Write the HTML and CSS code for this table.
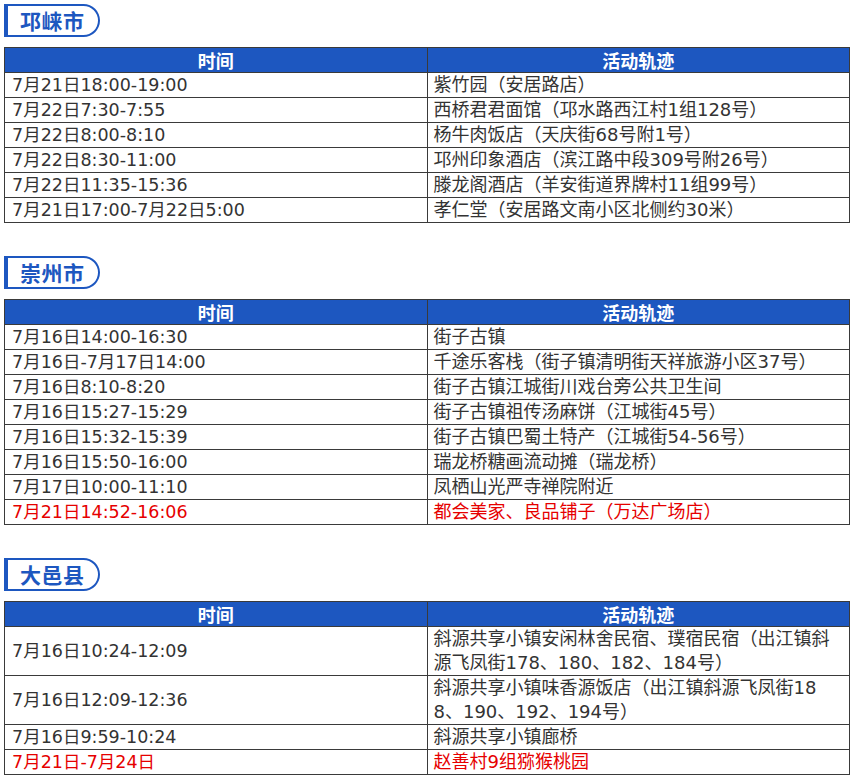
FILE: index.html
```html
<!DOCTYPE html>
<html lang="zh">
<head>
<meta charset="utf-8">
<title>活动轨迹</title>
<link rel="stylesheet" href="styles.css">
</head>
<body>
<div class="page">
  <section class="area">
    <div class="tag">邛崃市</div>
    <table class="trace">
      <thead><tr><th>时间</th><th>活动轨迹</th></tr></thead>
      <tbody>
        <tr><td>7月21日18:00-19:00</td><td>紫竹园（安居路店）</td></tr>
        <tr><td>7月22日7:30-7:55</td><td>西桥君君面馆（邛水路西江村1组128号）</td></tr>
        <tr><td>7月22日8:00-8:10</td><td>杨牛肉饭店（天庆街68号附1号）</td></tr>
        <tr><td>7月22日8:30-11:00</td><td>邛州印象酒店（滨江路中段309号附26号）</td></tr>
        <tr><td>7月22日11:35-15:36</td><td>滕龙阁酒店（羊安街道界牌村11组99号）</td></tr>
        <tr><td>7月21日17:00-7月22日5:00</td><td>孝仁堂（安居路文南小区北侧约30米）</td></tr>
      </tbody>
    </table>
  </section>
  <section class="area">
    <div class="tag">崇州市</div>
    <table class="trace">
      <thead><tr><th>时间</th><th>活动轨迹</th></tr></thead>
      <tbody>
        <tr><td>7月16日14:00-16:30</td><td>街子古镇</td></tr>
        <tr><td>7月16日-7月17日14:00</td><td>千途乐客栈（街子镇清明街天祥旅游小区37号）</td></tr>
        <tr><td>7月16日8:10-8:20</td><td>街子古镇江城街川戏台旁公共卫生间</td></tr>
        <tr><td>7月16日15:27-15:29</td><td>街子古镇祖传汤麻饼（江城街45号）</td></tr>
        <tr><td>7月16日15:32-15:39</td><td>街子古镇巴蜀土特产（江城街54-56号）</td></tr>
        <tr><td>7月16日15:50-16:00</td><td>瑞龙桥糖画流动摊（瑞龙桥）</td></tr>
        <tr><td>7月17日10:00-11:10</td><td>凤栖山光严寺禅院附近</td></tr>
        <tr class="hot"><td>7月21日14:52-16:06</td><td>都会美家、良品铺子（万达广场店）</td></tr>
      </tbody>
    </table>
  </section>
  <section class="area">
    <div class="tag">大邑县</div>
    <table class="trace">
      <thead><tr><th>时间</th><th>活动轨迹</th></tr></thead>
      <tbody>
        <tr><td>7月16日10:24-12:09</td><td>斜源共享小镇安闲林舍民宿、璞宿民宿（出江镇斜<br>源飞凤街178、180、182、184号）</td></tr>
        <tr><td>7月16日12:09-12:36</td><td>斜源共享小镇味香源饭店（出江镇斜源飞凤街18<br>8、190、192、194号）</td></tr>
        <tr><td>7月16日9:59-10:24</td><td>斜源共享小镇廊桥</td></tr>
        <tr class="hot"><td>7月21日-7月24日</td><td>赵善村9组猕猴桃园</td></tr>
      </tbody>
    </table>
  </section>
</div>
</body>
</html>
```

FILE: styles.css
```css
html, body {
  margin: 0;
  padding: 0;
  background: #ffffff;
}

.page {
  padding: 4px 6px 0 4px;
  font-family: "Noto Sans CJK SC", "Microsoft YaHei", sans-serif;
  color: #333333;
}

.area {
  margin-bottom: 33px;
}

.tag {
  box-sizing: border-box;
  width: 96px;
  height: 33px;
  border: 2.5px solid #1d57c0;
  border-left-width: 4px;
  border-radius: 0 17px 17px 0;
  color: #1d57c0;
  font-weight: 700;
  font-size: 21px;
  line-height: 28px;
  letter-spacing: 0.5px;
  padding-left: 12px;
  margin-bottom: 10px;
}

.trace {
  width: 100%;
  border-collapse: collapse;
  table-layout: fixed;
  font-size: 17.5px;
  line-height: 24px;
}

.trace th,
.trace td {
  border: 1px solid #3a3a3a;
  padding: 0 0 0 7px;
  text-align: left;
  vertical-align: middle;
  font-weight: 400;
  white-space: nowrap;
}

.trace td {
  font-family: "DejaVu Sans", "Noto Sans CJK SC", sans-serif;
}

.trace th {
  background: #1d57c0;
  color: #ffffff;
  text-align: center;
  font-weight: 700;
  font-size: 18px;
  padding: 0;
}

.trace td + td {
  padding-left: 6px;
  font-size: 18px;
}

.hot td {
  color: #e60000;
}
```
